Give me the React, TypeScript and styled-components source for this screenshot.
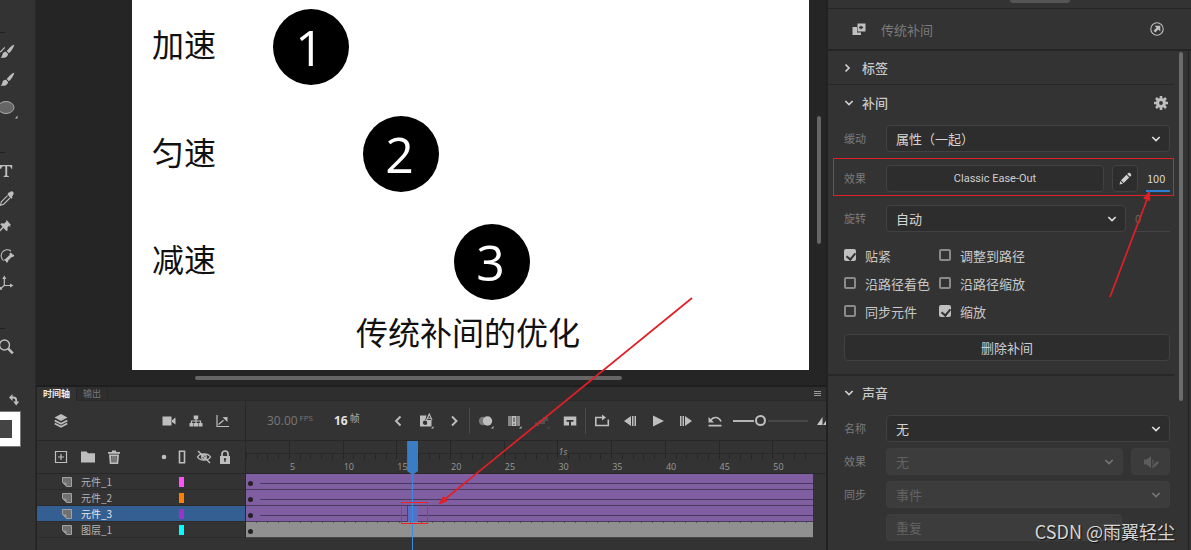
import React from 'react';
import styled, { createGlobalStyle, css } from 'styled-components';

const GlobalStyle = createGlobalStyle`
  * { box-sizing: border-box; }
  body {
    margin: 0;
    background: #252525;
    color: #c8c8c8;
    font-family: "Noto Sans CJK SC", "Open Sans", sans-serif;
    font-size: 13px;
  }
  button, input, select { font: inherit; color: inherit; margin: 0; }
  button { border: 0; padding: 0; background: none; cursor: pointer; }
  svg { display: block; flex: none; }
`;

const c = {
  panel: '#333333',
  dark: '#252525',
  line: '#282828',
  icon: '#bebebe',
  muted: '#7b7b7b',
  red: '#e02027',
  purple: '#7f5fa2',
};

const App = styled.div`
  position: relative;
  display: grid;
  grid-template-columns: 36px minmax(0, 1fr) 365px;
  min-height: 100vh;
  overflow: hidden;
`;

/* ---------- tool bar ---------- */

const Tools = styled.nav`
  display: flex;
  flex-direction: column;
  align-items: flex-start;
  padding-top: 1px;
  background: ${c.panel};
  border-right: 1px solid #2a2a2a;
`;

const Tool = styled.button`
  width: 20px;
  height: 28px;
  color: ${c.icon};
`;

const ToolRule = styled.hr`
  width: 5px;
  height: 1px;
  margin: 31px 0 4px;
  border: 0;
  background: #222;
`;

const SwapButton = styled.button`
  width: 20px;
  height: 16px;
  margin-top: 31px;
  color: ${c.icon};
`;

const Swatch = styled.button`
  width: 20px;
  height: 34px;
  margin-top: 4px;
  border: 8px solid #fff;
  border-left: 0;
  background: #444;
  box-shadow: 0 0 0 1px #777;
`;

/* ---------- stage ---------- */

const Center = styled.main`
  display: flex;
  flex-direction: column;
  min-width: 0;
`;

const Stage = styled.section`
  flex: 1;
  display: grid;
  grid-template-columns: 96px minmax(0, 1fr) 17px;
  grid-template-rows: minmax(360px, 1fr) 15px;
  background: ${c.dark};
`;

const Canvas = styled.div`
  position: relative;
  grid-column: 2;
  background: #fff;
  color: #111;
  overflow: hidden;
`;

const CanvasText = styled.span<{ $x: number; $y: number }>`
  position: absolute;
  left: ${(p) => p.$x}px;
  top: ${(p) => p.$y}px;
  font-size: 32px;
  line-height: 40px;
  white-space: nowrap;
`;

const Ball = styled.span<{ $x: number; $y: number }>`
  position: absolute;
  left: ${(p) => p.$x}px;
  top: ${(p) => p.$y}px;
  width: 76px;
  height: 76px;
  padding-right: 3px;
  border-radius: 50%;
  background: #000;
  color: #fff;
  font: 50px/76px "Open Sans", sans-serif;
  text-align: center;
`;

const StageScrollY = styled.div`
  width: 4px;
  height: 128px;
  margin: 116px 0 0 8px;
  border-radius: 2px;
  background: #666;
`;

const StageScrollX = styled.div`
  grid-column: 1 / -1;
  width: 54%;
  height: 4px;
  margin: 6px 0 0 159px;
  border-radius: 2px;
  background: #666;
`;

/* ---------- timeline ---------- */

const Timeline = styled.section`
  background: ${c.panel};
  border-top: 2px solid #1e1e1e;
  border-left: 1px solid #232323;
  padding-bottom: 12px;
`;

const TabBar = styled.div`
  display: flex;
  height: 14px;
  background: #2e2e2e;
  border-bottom: 1px solid #292929;
`;

const Tab = styled.button<{ $on?: boolean }>`
  height: ${(p) => (p.$on ? 14 : 13)}px;
  padding: 0 6px;
  border-right: 1px solid #282828;
  background: ${(p) => (p.$on ? c.panel : 'transparent')};
  color: ${(p) => (p.$on ? '#eee' : '#777')};
  font-size: 9px;
  line-height: 10px;
  font-weight: ${(p) => (p.$on ? 700 : 400)};
`;

const TabMenu = styled.button`
  margin-left: auto;
  width: 12px;
  color: #999;
`;

const Split = styled.div`
  display: grid;
  grid-template-columns: 209px minmax(0, 1fr);
`;

const LeftBar = styled.div<{ $h: number }>`
  display: flex;
  align-items: center;
  height: ${(p) => p.$h}px;
  padding: 0 9px 0 10px;
  border-right: 1px solid ${c.line};
  border-bottom: 1px solid ${c.line};
`;

const Controls = styled.div`
  display: flex;
  align-items: center;
  min-width: 0;
  overflow: hidden;
  padding-left: 21px;
  border-bottom: 1px solid ${c.line};
`;

const IconButton = styled.button<{ $w?: number; $dim?: boolean }>`
  display: grid;
  place-items: center;
  flex: none;
  width: ${(p) => p.$w ?? 28}px;
  height: 26px;
  color: ${(p) => (p.$dim ? '#505050' : c.icon)};
`;

const Push = styled.span`
  flex: 1;
`;

const Readout = styled.output<{ $w: number; $strong?: boolean }>`
  display: flex;
  flex: none;
  gap: 2px;
  width: ${(p) => p.$w}px;
  color: ${(p) => (p.$strong ? '#e4e4e4' : '#777')};
  font: ${(p) => (p.$strong ? 700 : 400)} 12px/18px "Open Sans", "Noto Sans CJK SC", sans-serif;

  small {
    font-size: ${(p) => (p.$strong ? 10 : 8)}px;
    line-height: 12px;
    font-weight: 400;
    color: ${(p) => (p.$strong ? '#aaa' : '#777')};
  }
`;

const Divider = styled.span`
  flex: none;
  width: 1px;
  height: 26px;
  margin: 0 2px 0 1px;
  background: #4a4a4a;
`;

const Zoom = styled.input`
  flex: none;
  appearance: none;
  width: 75px;
  height: 12px;
  margin: 0 8px 0 3px;
  background: linear-gradient(to right, #b5b5b5 21px, transparent 21px, transparent 35px, #484848 35px) center / 100% 2px no-repeat;

  &::-webkit-slider-thumb {
    appearance: none;
    width: 11px;
    height: 11px;
    border: 2px solid ${c.icon};
    border-radius: 50%;
    background: ${c.panel};
  }
`;

const LayerHead = styled.div`
  display: grid;
  grid-template-columns: 16px 20px 24px 18px;
  margin-right: 2px;
`;

const Layer = styled.div<{ $on?: boolean }>`
  display: grid;
  grid-template-columns: 12px 90px 6px;
  align-items: center;
  column-gap: 8px;
  height: 16px;
  padding-left: 24px;
  border-right: 1px solid ${c.line};
  border-bottom: 1px solid #2b2b2b;
  background: ${(p) => (p.$on ? '#345f92' : 'transparent')};
  color: ${(p) => (p.$on ? '#e6e6e6' : '#b5b5b5')};
  font-size: 10px;
  line-height: 15px;
`;

const LayerColor = styled.span<{ $color: string }>`
  width: 5px;
  height: 10px;
  background: ${(p) => p.$color};
`;

const Frames = styled.div`
  position: relative;
  min-width: 0;
`;

const Ruler = styled.div`
  display: grid;
  grid-template-columns: repeat(54, minmax(0, 1fr));
  height: 33px;
  border-bottom: 1px solid ${c.line};
  background: linear-gradient(#292929, #292929) 0 12px / 100% 1px no-repeat;
  color: #999;
  font: 9px/12px "Open Sans", sans-serif;
`;

const Tick = styled.span<{ $major: boolean }>`
  display: flex;
  flex-direction: column;
  justify-content: flex-end;
  padding-left: 1px;
  white-space: nowrap;
  background: linear-gradient(#262626, #262626) 0 ${(p) => (p.$major ? 0 : 12)}px / 1px
    ${(p) => (p.$major ? 18 : 6)}px no-repeat;

  i { line-height: 18px; }
`;

const Strip = styled.div<{ $plain?: boolean }>`
  display: flex;
  align-items: center;
  gap: 7px;
  height: 16px;
  margin-right: 13px;
  padding: 4px 0 0 2px;
  border-bottom: 1px solid #4a3b5c;
  background: ${c.purple};

  &::before {
    content: "";
    width: 5px;
    height: 5px;
    border-radius: 50%;
    background: #222;
  }
  &::after {
    content: "";
    flex: 1;
    height: 1px;
    background: #49365f;
  }
  ${(p) =>
    p.$plain &&
    css`
      background: repeating-linear-gradient(to right, transparent 0 10px, #555 10px 11px) 0 0 / 100% 1px no-repeat #909090;
      border-bottom-color: #444;
      &::after { background: none; }
    `}
`;

const Playhead = styled.div`
  position: absolute;
  top: 0;
  bottom: -12px;
  width: 11px;
  background: linear-gradient(#3d8be0, #3d8be0) 5px 0 / 1px 100% no-repeat;

  &::before {
    content: "";
    display: block;
    height: 34px;
    background: #3b7dc4;
    clip-path: polygon(0 0, 100% 0, 100% 88%, 50% 100%, 0 88%);
  }
`;

const CurrentFrame = styled.div`
  position: absolute;
  top: 65px;
  width: 11px;
  height: 16px;
  border-left: 1px solid #4a3b8c;
  background: #5571c6;
`;

const FrameMark = styled.div`
  position: absolute;
  top: 61px;
  width: 27px;
  height: 22px;
  margin-left: -6px;
  border: 1px solid #f02028;
`;

/* ---------- properties ---------- */

const Properties = styled.aside`
  position: relative;
  display: flex;
  flex-direction: column;
  background: ${c.panel};
  border-left: 2px solid #222;
`;

const Grip = styled.div`
  display: flex;
  justify-content: center;
  height: 9px;
  padding-left: 60px;
  border-bottom: 1px solid ${c.dark};

  &::before {
    content: "";
    width: 60px;
    height: 3px;
    border-radius: 0 0 3px 3px;
    background: #555;
  }
`;

const ObjectBar = styled.header`
  display: flex;
  align-items: center;
  gap: 14px;
  height: 42px;
  padding: 0 26px 0 23px;
  border-bottom: 2px solid ${c.dark};
  color: ${c.muted};
`;

const Body = styled.div`
  flex: 1;
  display: grid;
  grid-template-columns: minmax(0, 1fr) 14px;
  margin-right: 2px;
  border-right: 1px solid #222;
`;

const PanelScroll = styled.div`
  width: 4px;
  height: 70%;
  margin: 1px 0 0 5px;
  border-radius: 2px;
  background: #6c6c6c;
`;

const Section = styled.section<{ $rule?: number }>`
  padding: 0 4px 0 16px;
  border-bottom: ${(p) => p.$rule ?? 0}px solid #272727;
`;

const SectionHead = styled.div<{ $h: number }>`
  display: flex;
  align-items: center;
  justify-content: space-between;
  height: ${(p) => p.$h}px;
`;

const Fold = styled.button`
  display: flex;
  align-items: center;
  gap: 8px;
  font-weight: 500;
  line-height: 20px;
`;

const Fields = styled.div<{ $gap: number; $top: number }>`
  display: grid;
  gap: ${(p) => p.$gap}px;
  padding-top: ${(p) => p.$top}px;
`;

const Field = styled.div`
  display: flex;
  align-items: center;
  gap: 8px;
  height: 27px;
`;

const FieldLabel = styled.label`
  flex: none;
  width: 34px;
  padding-bottom: 1px;
  color: ${c.muted};
  font-size: 11px;
`;

const box = css`
  height: 27px;
  border: 1px solid #414141;
  border-radius: 4px;
  background: #2d2d2d;
`;

const SelectWrap = styled.span`
  flex: 1;
  display: grid;
  align-items: center;

  > * { grid-area: 1 / 1; }
  > svg { justify-self: end; margin-right: 9px; pointer-events: none; }
`;

const Select = styled.select`
  ${box}
  appearance: none;
  width: 100%;
  padding: 0 24px 1px 9px;
  color: #d4d4d4;

  &:disabled {
    opacity: 1;
    background: #3c3c3c;
    border-color: #3e3e3e;
    color: #626262;
  }
`;

const BoxButton = styled.button<{ $w?: number }>`
  ${box}
  display: grid;
  place-items: center;
  flex: ${(p) => (p.$w ? 'none' : 1)};
  width: ${(p) => (p.$w ? `${p.$w}px` : '100%')};
  color: #cfcfcf;
  font-family: Roboto, "Noto Sans CJK SC", sans-serif;
  font-size: 11px;

  &:disabled { background: #3c3c3c; border-color: #3e3e3e; color: #5c5c5c; }
`;

const DeleteButton = styled(BoxButton)`
  margin: 9px 0 13px;
  font-size: 13px;
`;

const NumberBox = styled.input<{ $w: number }>`
  flex: none;
  width: ${(p) => p.$w}px;
  height: 27px;
  padding: 0 0 0 1px;
  border: 0;
  border-bottom: 2px solid #2d7fd6;
  background: none;
  color: #d8d8d8;
  font-size: 11px;

  &:disabled { border-bottom: 1px solid #444; color: #666; }
`;

const Checks = styled.div`
  display: grid;
  grid-template-columns: 95px 1fr;
  grid-auto-rows: 28px;
  padding-top: 9px;
`;

const Check = styled.label`
  display: flex;
  align-items: center;
  gap: 9px;
  white-space: nowrap;
`;

const CheckBox = styled.input`
  appearance: none;
  flex: none;
  width: 12px;
  height: 12px;
  border: 2px solid #8a8a8a;
  border-radius: 2px;

  &:checked { border-color: #c0c0c0; background: #c0c0c0; }
  &:checked::after {
    content: "";
    display: block;
    width: 4px;
    height: 7px;
    margin-left: 2px;
    border: solid #333;
    border-width: 0 2px 2px 0;
    transform: rotate(40deg);
  }
`;

const EffectMark = styled.div`
  position: absolute;
  left: 5px;
  right: 17px;
  top: 158px;
  height: 38px;
  border: 1px solid ${c.red};
  pointer-events: none;
`;

const Arrow = styled.svg<{ $x: number; $y: number }>`
  position: absolute;
  left: ${(p) => p.$x}px;
  top: ${(p) => p.$y}px;
  pointer-events: none;
`;

const Watermark = styled.span`
  position: absolute;
  right: 16px;
  bottom: 6px;
  color: #d6d6d6;
  font-size: 18px;
  line-height: 26px;
  text-shadow: 1px 1px 1px #111;
  white-space: nowrap;
`;

/* ---------- icons ---------- */

type IconProps = { w?: number; h?: number; children: React.ReactNode };
const Icon = ({ w = 16, h = 16, children }: IconProps) => (
  <svg width={w} height={h} viewBox={`0 0 ${w} ${h}`} fill="currentColor" aria-hidden="true">
    {children}
  </svg>
);
const stroke = (width = 1) => ({ fill: 'none', stroke: 'currentColor', strokeWidth: width });

const Chevron = ({ dir, color = '#d0d0d0' }: { dir: 'down' | 'right'; color?: string }) => (
  <svg width="10" height="10" viewBox="0 0 10 10" fill="none" stroke={color} strokeWidth="1.7" aria-hidden="true">
    <path d={dir === 'down' ? 'M1.3 3 5 6.5 8.7 3' : 'M1.5 1.5 5 5 1.5 8.5'} />
  </svg>
);

const brush = (
  <>
    <path d="M14.4 7.4c-2.7 1-6 4-7.7 6.7l2.2 2.1C11.3 14 13.8 10.5 14.4 7.4Z" />
    <path d="M6 14.7c-1.8-.3-3.2.7-3.5 2.6-.2 1.5-.9 2.6-2 3.3 3.5.8 7.3-.5 7.6-3.7Z" />
  </>
);

const tools: Record<string, { label: string; art: React.ReactNode }[]> = {
  draw: [
    { label: '流畅画笔', art: <>{brush}<path {...stroke(1.2)} d="M-1 15c3 .4 2.5-2.5 6-4.500" /></> },
    { label: '画笔', art: brush },
    {
      label: '椭圆',
      art: (
        <>
          <ellipse cx="6" cy="14.5" rx="8" ry="6" fill="#666" stroke="#aaa" />
          <path d="M17.5 22.500v3H15Z" />
        </>
      ),
    },
  ],
  edit: [
    { label: '文本', art: <path d="M0 8h12.2v3.800h-1c-.2-1.800-.9-2.600-2.300-2.600H7.200v8.900c0 .9.500 1.100 1.700 1.200v.8H3.600v-.8c1.200-.1 1.700-.3 1.700-1.200V9.200H3.500c-1.400 0-2.100.8-2.300 2.600H0Z" /> },
    {
      label: '滴管',
      art: (
        <>
          <path d="M7.500 9.500 9 11l-.2.200 2.600 2.600 1.300-1.300-.8-.8 1.400-2c.8-1.300.2-2.800-.9-3.200-1.200-.5-2.200 0-3.200 1.300l-.6-.5Z" />
          <path {...stroke(1.1)} d="m7.600 10.600-6.300 6.200-.8 3.500 3.200-1.100 6.200-6.200" />
        </>
      ),
    },
    { label: '资源变形', art: <path d="m7.600 7.500 3 6.100-.8.5M6.500 7 11 12l-1.300-.1-2.200 2.500.1 3-1.200.7-3-3L.4 18.300l-1.200-.1.300-1.300 3-3.100-2.200-2.300.8-1.200 3.200.1 2-1.900-.1-1.300Z" /> },
    {
      label: '骨骼',
      art: (
        <>
          <path {...stroke(1.1)} d="M3.500 19.500A6 6 0 1 1 11 10" />
          <path d="m5.400 18.100 4.200-4.200c-.3-1.400.5-2.300 1.500-2 .7.200.8.900 1.200 1.300.5.300 1.500.2 1.700 1 .3 1.300-.8 2.200-2.200 1.700l-3.600 3.700c.2 1.300-.5 2.100-1.500 1.900-.8-.2-.6-1-1.100-1.500-.4-.3-1-.4-1.200-.8-.4-.9.200-1.500 1-1.100Z" />
        </>
      ),
    },
    {
      label: '3D 旋转',
      art: (
        <>
          <path {...stroke(1.2)} d="M4.300 9v7.500H12M4.300 16.500 0 20" />
          <path d="m4.300 6.500 2 3.500h-4ZM13.500 16.500 10 18.500v-4ZM-.8 20.900l1-3.300 2.300 2.800Z" />
        </>
      ),
    },
  ],
  view: [{ label: '缩放', art: <><circle {...stroke(1.4)} cx="4.5" cy="12" r="5" /><path {...stroke(2.6)} d="m8.200 15.700 4.600 4.600" /></> }],
};

const layers = [
  { name: '元件_1', color: '#ff4fff' },
  { name: '元件_2', color: '#ff7f00' },
  { name: '元件_3', color: '#9a33cc', on: true },
  { name: '图层_1', color: '#00ffff', plain: true },
];

const atFrame = (n: number) => ({ left: `${((n - 1) / 54) * 100}%` });

const ToolGroup = ({ items }: { items: { label: string; art: React.ReactNode }[] }) => (
  <>
    <ToolRule />
    {items.map((t) => (
      <Tool key={t.label} aria-label={t.label}>
        <Icon w={20} h={28}>{t.art}</Icon>
      </Tool>
    ))}
  </>
);

const Dropdown = ({ id, value, disabled }: { id: string; value: string; disabled?: boolean }) => (
  <SelectWrap>
    <Select id={id} disabled={disabled} defaultValue={value}>
      <option>{value}</option>
    </Select>
    <Chevron dir="down" color={disabled ? '#777' : '#dedede'} />
  </SelectWrap>
);

const checks: [string, boolean][] = [
  ['贴紧', true],
  ['调整到路径', false],
  ['沿路径着色', false],
  ['沿路径缩放', false],
  ['同步元件', false],
  ['缩放', true],
];

const corner = 'M15.5 13v2.500H13Z';

export default function AnimateWorkspace() {
  return (
    <App>
      <GlobalStyle />

      <Tools aria-label="工具">
        <ToolGroup items={tools.draw} />
        <ToolGroup items={tools.edit} />
        <ToolGroup items={tools.view} />
        <SwapButton aria-label="交换颜色">
          <Icon w={20} h={16}>
            <path {...stroke(1.8)} d="M12 5.500h1.500c1.700 0 2.700 1 2.700 2.700V10" />
            <path d="M9 5.500 12.500 2v7ZM16.200 13.500l-3-4h6Z" />
          </Icon>
        </SwapButton>
        <Swatch aria-label="笔触颜色" />
      </Tools>

      <Center>
        <Stage>
          <Canvas>
            <CanvasText $x={20} $y={23}>加速</CanvasText>
            <CanvasText $x={20} $y={131}>匀速</CanvasText>
            <CanvasText $x={20} $y={238}>减速</CanvasText>
            <CanvasText $x={224} $y={311}>传统补间的优化</CanvasText>
            <Ball $x={141} $y={9}>1</Ball>
            <Ball $x={231} $y={116}>2</Ball>
            <Ball $x={322} $y={224}>3</Ball>
          </Canvas>
          <StageScrollY />
          <StageScrollX />
        </Stage>

        <Timeline>
          <TabBar>
            <Tab $on>时间轴</Tab>
            <Tab>输出</Tab>
            <TabMenu aria-label="面板菜单">
              <Icon w={8} h={8}><path {...stroke()} d="M0 1.500h7M0 3.500h7M0 5.500h7" /></Icon>
            </TabMenu>
          </TabBar>
          <Split>
            <LeftBar $h={40}>
              <IconButton aria-label="图层视图">
                <Icon>
                  <path d="M8 1 14.500 4.500 8 8 1.500 4.500Z" />
                  <path {...stroke(1.8)} d="M1.700 7.500 8 10.800 14.300 7.500M1.700 10.500 8 13.800l6.300-3.300" />
                </Icon>
              </IconButton>
              <Push />
              <IconButton $w={27} aria-label="添加摄像头">
                <Icon><path d="M1.500 3.500h9v9h-9ZM11 7.200 14.500 4.500v7L11 9Z" /></Icon>
              </IconButton>
              <IconButton $w={27} aria-label="父级视图">
                <Icon>
                  <path d="M5.700 2.500h4.500v3.800H5.700ZM1.500 10h4v3.500h-4ZM6 10h4v3.500H6ZM10.500 10h4v3.500h-4Z" />
                  <path {...stroke(1.2)} d="M8 6v2M3.500 10V8h9v2M8 8v2" />
                </Icon>
              </IconButton>
              <IconButton $w={27} aria-label="图层深度">
                <Icon><path {...stroke(1.2)} d="M2 2v11.500H14M3.500 11.500l5-4.300" /><path d="M12.500 4v5L7.500 4.200Z" /></Icon>
              </IconButton>
            </LeftBar>
            <Controls>
              <Readout $w={67}>30.00<small>FPS</small></Readout>
              <Readout $w={50} $strong>16<small>帧</small></Readout>
              <IconButton aria-label="上一关键帧"><Icon><path {...stroke(1.9)} d="M10.500 3.500 6 8l4.500 4.500" /></Icon></IconButton>
              <IconButton aria-label="自动关键帧">
                <Icon>
                  <path fillRule="evenodd" d="M2 2.500h6.500L7.300 7H13.500v6.500H2ZM7 7.500a2.200 2.200 0 1 0 .1 4.400A2.200 2.200 0 0 0 7 7.500Z" />
                  <path {...stroke(1.1)} d="m8.500 7 2.800-6L14 7M9.500 5.300h3.500" />
                  <path d={corner} />
                </Icon>
              </IconButton>
              <IconButton aria-label="下一关键帧"><Icon><path {...stroke(1.9)} d="M6 3.500 10.500 8 6 12.500" /></Icon></IconButton>
              <Divider />
              <IconButton aria-label="绘图纸外观">
                <Icon><circle cx="5" cy="8" r="4.2" fill="#777" /><circle cx="9.5" cy="8" r="4.7" /><path d={corner} /></Icon>
              </IconButton>
              <IconButton aria-label="编辑多个帧">
                <Icon>
                  <path d="M2 3h3v10H2ZM11 3h3v10h-3Z" fill="#888" />
                  <path d="M5.500 3h5v10h-5Z" /><path d="M7.500 4.500h1v4.500h-1Zm0 6h1V12h-1Z" fill="#333" />
                  <path d={corner} />
                </Icon>
              </IconButton>
              <IconButton $dim aria-label="创建补间">
                <Icon><path d="M9 4h5v4h-3v3H5v2H1V9.500h4V7h4Z" /><path d={corner} /></Icon>
              </IconButton>
              <IconButton aria-label="插入帧">
                <Icon><path fillRule="evenodd" d="M1.800 3.500h12.500v9H9V8.800h2.500V7H4.500v1.800h2.500v3.700H1.800Z" /></Icon>
              </IconButton>
              <Divider />
              <IconButton aria-label="循环">
                <Icon><path {...stroke(1.6)} d="M4.500 4.500H1.800v8h12.500V6.500M3 4.500h6" /><path d="m8 1.500 4 3-4 3Z" /></Icon>
              </IconButton>
              <IconButton aria-label="后退一帧"><Icon><path d="M9 3v10L2 8ZM10 3h1.500v10H10ZM12.500 3H14v10h-1.500Z" /></Icon></IconButton>
              <IconButton aria-label="播放"><Icon><path d="M3 2.500 14 8 3 13.500Z" /></Icon></IconButton>
              <IconButton aria-label="前进一帧"><Icon><path d="M7 3v10l7-5ZM4.500 3H6v10H4.500ZM2 3h1.500v10H2Z" /></Icon></IconButton>
              <IconButton $w={30} aria-label="重置缩放">
                <Icon><path {...stroke(1.6)} d="M3.500 7.500C6 3.500 11.500 3 14 8.500M1.500 12.600h13" /><path d="M1.500 4v5.500H7Z" /></Icon>
              </IconButton>
              <Zoom type="range" min={0} max={100} defaultValue={35} aria-label="时间轴缩放" />
              <Icon w={16} h={12}><path d="m1 10 5.500-8v8ZM7 10l5.500-8v8Z" /></Icon>
            </Controls>

            <div>
              <LeftBar $h={33}>
                <IconButton $w={27} aria-label="新建图层">
                  <Icon><path {...stroke(1.2)} d="M2.500 2.500h11v11h-11ZM8 5v6M5 8h6" /></Icon>
                </IconButton>
                <IconButton $w={27} aria-label="新建文件夹">
                  <Icon><path d="M1 2.500h5.500L8 4.300h7V13.500H1Z" /></Icon>
                </IconButton>
                <IconButton $w={26} aria-label="删除">
                  <Icon>
                    <path fillRule="evenodd" d="M2 3h4V1.500h4V3h4v1.700H2ZM3 5.500h10L12.200 15H3.800ZM5.300 7l.3 6.500h1L6.400 7ZM7.500 7v6.500h1V7ZM9.600 7l-.2 6.500h1l.3-6.500Z" />
                  </Icon>
                </IconButton>
                <Push />
                <LayerHead>
                  <IconButton $w={16} aria-label="突出显示"><Icon><circle cx="8" cy="8" r="2.3" /></Icon></IconButton>
                  <IconButton $w={20} aria-label="显示为轮廓"><Icon><path {...stroke(1.6)} d="M5.500 2.300h5v11.400h-5Z" /></Icon></IconButton>
                  <IconButton $w={24} aria-label="隐藏图层">
                    <Icon><path {...stroke(1.4)} d="M1.500 8C4 3.800 12 3.800 14.500 8 12 12.200 4 12.200 1.500 8ZM2 2l12 12" /><circle {...stroke(1.4)} cx="8" cy="8" r="2.2" /></Icon>
                  </IconButton>
                  <IconButton $w={18} aria-label="锁定图层">
                    <Icon>
                      <path {...stroke(1.7)} d="M5 7.500V5a3 3 0 0 1 6 0v2.500" />
                      <path fillRule="evenodd" d="M3 7h10v8H3ZM8 9a1.300 1.300 0 0 0-.6 2.400V13h1.200v-1.600A1.300 1.300 0 0 0 8 9Z" />
                    </Icon>
                  </IconButton>
                </LayerHead>
              </LeftBar>
              {layers.map((l) => (
                <Layer key={l.name} $on={l.on}>
                  <Icon w={12} h={12}>
                    <path d="M1.500 1.500h9v9H5.500l-4-4Z" fill="#707070" stroke="#a2a2a2" />
                    <path d="M1.500 6.500h4v4Z" fill="#999" />
                  </Icon>
                  <span>{l.name}</span>
                  <LayerColor $color={l.color} />
                </Layer>
              ))}
            </div>

            <Frames>
              <Ruler>
                {Array.from({ length: 53 }, (_, i) => i + 1).map((n) => (
                  <Tick key={n} $major={n % 5 === 0}>
                    {n === 30 && <i>1s</i>}
                    {n % 5 === 0 && n}
                  </Tick>
                ))}
              </Ruler>
              {layers.map((l) => (
                <Strip key={l.name} $plain={l.plain} />
              ))}
              <CurrentFrame style={atFrame(16)} />
              <Playhead style={atFrame(16)} />
              <FrameMark style={atFrame(16)} />
            </Frames>
          </Split>
        </Timeline>
      </Center>

      <Properties>
        <Grip />
        <ObjectBar>
          <Icon w={16} h={16}>
            <path d="M1.500 6h4.500v5.500H10V14H1.500Z" fill="#c0c0c0" />
            <path fillRule="evenodd" d="M6.500 2.500h8v8h-8ZM9.500 4.300v1.500H8v1.500h1.500v1.500L12.500 6.500Z" fill="#c0c0c0" />
          </Icon>
          <span>传统补间</span>
          <Push />
          <IconButton $w={16} aria-label="打开面板">
            <Icon><circle {...stroke(1.1)} cx="8" cy="8" r="6.2" /><path d="M5.500 4.700h5.800v5.800L9.300 8.600l-3 3-1.800-1.800 3-3Z" /></Icon>
          </IconButton>
        </ObjectBar>
        <Body>
          <div>
            <Section $rule={1}>
              <SectionHead $h={33}><Fold><Chevron dir="right" />标签</Fold></SectionHead>
            </Section>
            <Section $rule={2}>
              <SectionHead $h={36}>
                <Fold><Chevron dir="down" />补间</Fold>
                <IconButton $w={18} aria-label="补间选项">
                  <Icon>
                    <circle {...stroke(3.2)} cx="8" cy="8" r="3.5" />
                    <path {...stroke(2.6)} d="M8 1v2.500M8 12.500V15M1 8h2.500M12.500 8H15M3 3l2 2M11 11l2 2M3 13l2-2M11 5l2-2" />
                  </Icon>
                </IconButton>
              </SectionHead>
              <Fields $gap={13} $top={4}>
                <Field>
                  <FieldLabel htmlFor="ease">缓动</FieldLabel>
                  <Dropdown id="ease" value="属性（一起）" />
                </Field>
                <Field>
                  <FieldLabel htmlFor="effect">效果</FieldLabel>
                  <BoxButton id="effect">Classic Ease-Out</BoxButton>
                  <BoxButton $w={26} aria-label="编辑缓动">
                    <Icon><path d="m2.500 13.500.8-3.500 2.700 2.700ZM4 9.200 9.500 3.800l2.700 2.700-5.500 5.400ZM10.200 3l.8-.8c.8-.8 1.500-.7 2.100-.1l.8.800c.6.6.6 1.300 0 2l-1 .9Z" /></Icon>
                  </BoxButton>
                  <NumberBox $w={24} defaultValue="100" aria-label="缓动强度" />
                </Field>
                <Field>
                  <FieldLabel htmlFor="rotate">旋转</FieldLabel>
                  <Dropdown id="rotate" value="自动" />
                  <NumberBox $w={36} defaultValue="0" disabled aria-label="旋转次数" />
                </Field>
              </Fields>
              <Checks>
                {checks.map(([text, on]) => (
                  <Check key={text}>
                    <CheckBox type="checkbox" defaultChecked={on} />
                    {text}
                  </Check>
                ))}
              </Checks>
              <DeleteButton>删除补间</DeleteButton>
            </Section>
            <Section>
              <SectionHead $h={33}><Fold><Chevron dir="down" />声音</Fold></SectionHead>
              <Fields $gap={6} $top={6}>
                <Field>
                  <FieldLabel htmlFor="sound">名称</FieldLabel>
                  <Dropdown id="sound" value="无" />
                </Field>
                <Field>
                  <FieldLabel htmlFor="sound-effect">效果</FieldLabel>
                  <Dropdown id="sound-effect" value="无" disabled />
                  <BoxButton $w={39} disabled aria-label="编辑声音">
                    <Icon>
                      <path d="M1 5.500h2.500L8 2v12L3.500 10.500H1ZM9.500 5c1.200 1 1.500 3 .9 4.500L9.500 10.500Z" />
                      <path d="m9 14 .7-2.500 4.500-4.500 1.800 1.800-4.500 4.500Z" />
                    </Icon>
                  </BoxButton>
                </Field>
                <Field>
                  <FieldLabel htmlFor="sync">同步</FieldLabel>
                  <Dropdown id="sync" value="事件" disabled />
                </Field>
                <Field>
                  <FieldLabel as="span" />
                  <Dropdown id="repeat" value="重复" disabled />
                  <NumberBox $w={40} disabled aria-label="重复次数" />
                </Field>
              </Fields>
            </Section>
          </div>
          <PanelScroll />
        </Body>
        <EffectMark />
        <Arrow $x={276} $y={188} width="50" height="112" fill={c.red} stroke={c.red}>
          <path d="M6 109 44 9" strokeWidth="1.7" />
          <path d="m45.500 3.500.2 9-6-2.300Z" />
        </Arrow>
        <Watermark>CSDN @雨翼轻尘</Watermark>
      </Properties>

      <Arrow $x={436} $y={294} width="260" height="214" fill={c.red} stroke={c.red}>
        <path d="M256 4 8 206" strokeWidth="1.7" />
        <path d="m3 210 4.500-7.500 3.500 4.500Z" />
      </Arrow>
    </App>
  );
}
